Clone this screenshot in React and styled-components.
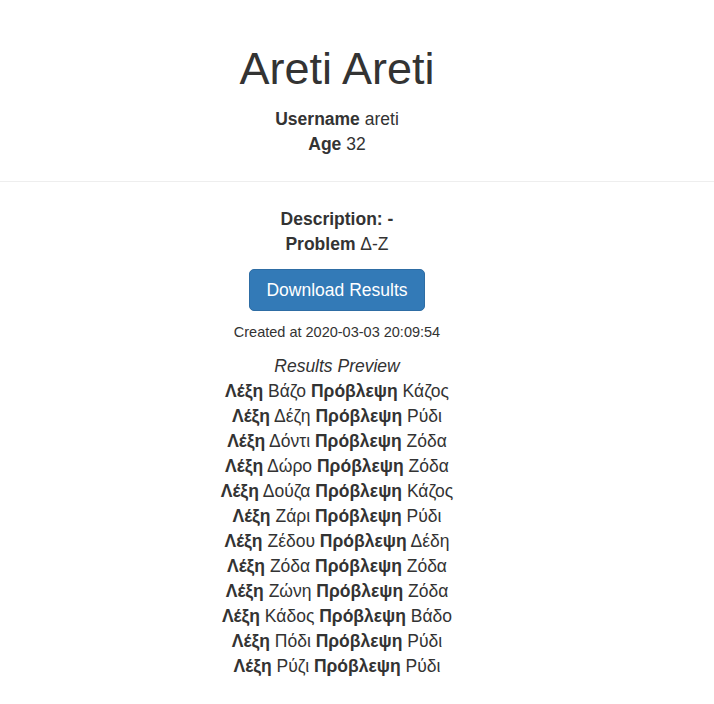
import React from 'react';
import styled, { createGlobalStyle } from 'styled-components';

const GlobalStyle = createGlobalStyle`
    html, body {
        margin: 0;
        padding: 0;
        background: #fff;
    }
    body {
        font-family: "Liberation Sans", Arial, sans-serif;
        font-size: 17.5px;
        line-height: 25px;
        color: #333;
    }
`;

const Page = styled.div`
    display: flex;
    flex-direction: column;
`;

const Header = styled.header`
    display: flex;
    flex-direction: column;
    align-items: center;
    padding: 44px 40px 24px 0;
    border-bottom: 1px solid #eee;
`;

const Title = styled.h1`
    margin: 0 0 13.5px;
    font-size: 45px;
    line-height: 49.5px;
    font-weight: 400;
`;

const InfoLine = styled.div`
    text-align: center;
`;

const Body = styled.main`
    display: flex;
    flex-direction: column;
    align-items: center;
    padding: 25px 40px 20px 0;
`;

const Label = styled.b`
    font-weight: 700;
`;

const DownloadButton = styled.button`
    margin: 12px 0 11px;
    padding: 8px 16px;
    font-family: inherit;
    font-size: 17.5px;
    line-height: 24px;
    color: #fff;
    background: #337ab7;
    border: 1px solid #2e6da4;
    border-radius: 5px;
    cursor: pointer;
`;

const Created = styled.div`
    font-size: 14.5px;
    line-height: 20px;
    margin-bottom: 12px;
`;

const PreviewTitle = styled.em`
    font-style: italic;
`;

const PreviewList = styled.div`
    display: flex;
    flex-direction: column;
    align-items: center;
`;

const results = [
    ['Βάζο', 'Κάζος'],
    ['Δέζη', 'Ρύδι'],
    ['Δόντι', 'Ζόδα'],
    ['Δώρο', 'Ζόδα'],
    ['Δούζα', 'Κάζος'],
    ['Ζάρι', 'Ρύδι'],
    ['Ζέδου', 'Δέδη'],
    ['Ζόδα', 'Ζόδα'],
    ['Ζώνη', 'Ζόδα'],
    ['Κάδος', 'Βάδο'],
    ['Πόδι', 'Ρύδι'],
    ['Ρύζι', 'Ρύδι'],
];

const App = () => (
    <Page>
        <GlobalStyle />
        <Header>
            <Title>Areti Areti</Title>
            <InfoLine><Label>Username</Label> areti</InfoLine>
            <InfoLine><Label>Age</Label> 32</InfoLine>
        </Header>
        <Body>
            <InfoLine><Label>Description: -</Label></InfoLine>
            <InfoLine><Label>Problem</Label> Δ-Ζ</InfoLine>
            <DownloadButton>Download Results</DownloadButton>
            <Created>Created at 2020-03-03 20:09:54</Created>
            <PreviewTitle>Results Preview</PreviewTitle>
            <PreviewList>
                {results.map(([word, guess], i) => (
                    <InfoLine key={i}>
                        <Label>Λέξη</Label> {word} <Label>Πρόβλεψη</Label> {guess}
                    </InfoLine>
                ))}
            </PreviewList>
        </Body>
    </Page>
);

export default App;
